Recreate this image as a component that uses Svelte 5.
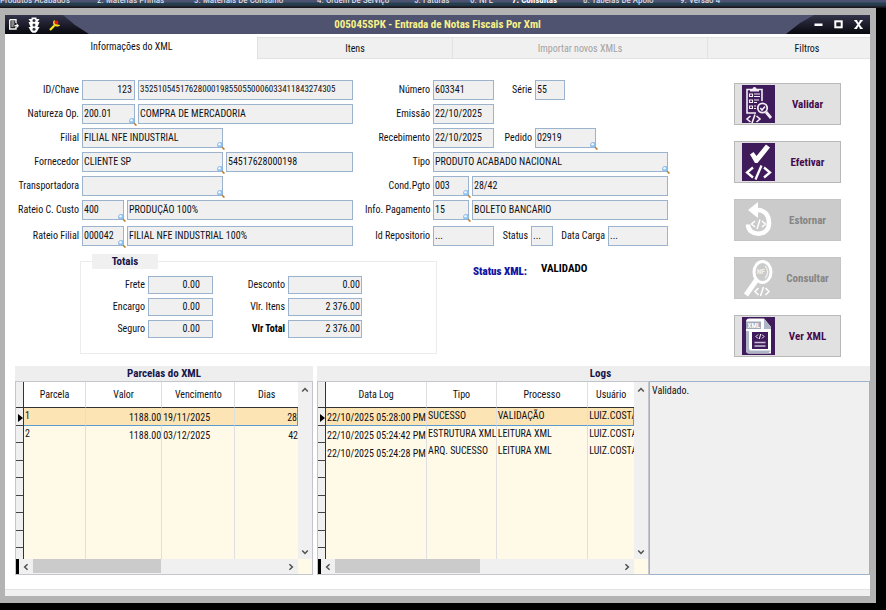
<script>
  const menu = [
    { text: 'Produtos Acabados', width: 97 },
    { text: '2. Matérias Primas', width: 97 },
    { text: '3. Materiais De Consumo', width: 123 },
    { text: '4. Ordem De Serviço', width: 97 },
    { text: '5. Faturas', width: 56 },
    { text: '6. NFE', width: 42 },
    { text: '7. Consultas', width: 71, active: true },
    { text: '8. Tabelas De Apoio', width: 97 },
    { text: '9. Versão 4', width: 80 }
  ];

  const leftRows = [
    [{ label: 'ID/Chave', value: '123', size: 'w53', right: true }, { name: 'Chave', value: '35251054517628000198550550006033411843274305', size: 'fill', long: true }],
    [{ label: 'Natureza Op.', value: '200.01', size: 'w53', lookup: true }, { name: 'Descrição da natureza', value: 'COMPRA DE MERCADORIA', size: 'fill' }],
    [{ label: 'Filial', value: 'FILIAL NFE INDUSTRIAL', size: 'w141', lookup: true }],
    [{ label: 'Fornecedor', value: 'CLIENTE SP', size: 'w141', lookup: true }, { name: 'CNPJ', value: '54517628000198', size: 'fill' }],
    [{ label: 'Transportadora', value: '', size: 'w141', lookup: true }],
    [{ label: 'Rateio C. Custo', value: '400', size: 'w42', lookup: true }, { name: 'Descrição do rateio', value: 'PRODUÇÃO 100%', size: 'fill' }],
    [{ label: 'Rateio Filial', value: '000042', size: 'w42', lookup: true }, { name: 'Descrição do rateio da filial', value: 'FILIAL NFE INDUSTRIAL 100%', size: 'fill' }]
  ];

  const rightRows = [
    [{ label: 'Número', value: '603341', size: 'w61' }, { label: 'Série', value: '55', size: 'w30', lw: 'l35' }],
    [{ label: 'Emissão', value: '22/10/2025', size: 'w61' }],
    [{ label: 'Recebimento', value: '22/10/2025', size: 'w61' }, { label: 'Pedido', value: '02919', size: 'w61', lw: 'l35', lookup: true }],
    [{ label: 'Tipo', value: 'PRODUTO ACABADO NACIONAL', size: 'fill', lookup: true }],
    [{ label: 'Cond.Pgto', value: '003', size: 'w36', lookup: true }, { name: 'Condição', value: '28/42', size: 'fill' }],
    [{ label: 'Info. Pagamento', value: '15', size: 'w36', lookup: true }, { name: 'Forma de pagamento', value: 'BOLETO BANCÁRIO', size: 'fill' }],
    [{ label: 'Id Repositorio', value: '...', size: 'w61' }, { label: 'Status', value: '...', size: 'w22', lw: 'l31' }, { label: 'Data Carga', value: '...', size: 'fill', lw: 'l49' }]
  ];

  const totals = [
    ['Frete', '0.00', 'Desconto', '0.00'],
    ['Encargo', '0.00', 'Vlr. Itens', '2 376.00'],
    ['Seguro', '0.00', 'Vlr Total', '2 376.00']
  ];

  const parcelas = [
    ['1', '1188.00', '19/11/2025', '28'],
    ['2', '1188.00', '03/12/2025', '42']
  ];
  const logs = [
    ['22/10/2025 05:28:00 PM', 'SUCESSO', 'VALIDAÇÃO', 'LUIZ.COSTA'],
    ['22/10/2025 05:24:42 PM', 'ESTRUTURA XML OK', 'LEITURA XML', 'LUIZ.COSTA'],
    ['22/10/2025 05:24:28 PM', 'ARQ. SUCESSO', 'LEITURA XML', 'LUIZ.COSTA']
  ];
  const blanks = (n) => Array.from({ length: n });
</script>

{#snippet field(f, id)}
  {#if f.lw}<label class="inline {f.lw}" for={id}>{f.label}</label>{/if}
  <span class="box {f.size}">
    <input {id} class:right={f.right} class:long={f.long} value={f.value} aria-label={f.name} readonly />
    {#if f.lookup}
      <svg class="lens" viewBox="0 0 8 8" aria-hidden="true">
        <path d="M4.500 4.500L7.400 7.600" stroke="#b98332" stroke-width="1.600" />
        <circle cx="3.100" cy="3" r="2.700" fill="#8fc4f2" stroke="#8fb4dc" stroke-width=".6" />
        <circle cx="2.500" cy="2.300" r="1.200" fill="#eef8ff" />
      </svg>
    {/if}
  </span>
{/snippet}

{#snippet form(rows, prefix)}
  <div class="form">
    {#each rows as row, r}
      <div class="row">
        <label for="{prefix}{r}-0">{row[0].label}</label>
        <div class="cells">
          {#each row as f, c}
            {@render field(c === 0 ? { ...f, lw: '' } : f, `${prefix}${r}-${c}`)}
          {/each}
        </div>
      </div>
    {/each}
  </div>
{/snippet}

{#snippet chevron(dir, name)}
  <button class="arrow" aria-label={name}>
    <svg class={dir} viewBox="0 0 8 8" aria-hidden="true"><path d="M1.2 5.6L4 2.6L6.8 5.6" fill="none" stroke="#505050" stroke-width="1.5" /></svg>
  </button>
{/snippet}

{#snippet grid(kind, heads, rows)}
  <div class="datagrid {kind}">
    <div class="viewport">
      <table>
        <colgroup><col class="mark" />{#each heads as h, i}<col class="c{i}" />{/each}</colgroup>
        <thead><tr><th class="mark"></th>{#each heads as h}<th>{h}</th>{/each}</tr></thead>
        <tbody>
          {#each rows as row, r}
            <tr class:selected={r === 0}>
              <td class="mark">{#if r === 0}<svg viewBox="0 0 5 8" aria-hidden="true"><path d="M0 0L5 4L0 8Z" /></svg>{/if}</td>
              {#each row as cell}<td>{cell}</td>{/each}
            </tr>
          {/each}
          {#each blanks(9 - rows.length) as _}
            <tr><td class="mark"></td>{#each heads as h}<td></td>{/each}</tr>
          {/each}
        </tbody>
      </table>
    </div>
    <div class="vscroll">{@render chevron('up', 'Rolar para cima')}{@render chevron('down', 'Rolar para baixo')}</div>
    <div class="hscroll">
      <span class="stop"></span>
      {@render chevron('left', 'Rolar para a esquerda')}
      <span class="track"><span class="thumb"></span></span>
      {@render chevron('rightward', 'Rolar para a direita')}
    </div>
  </div>
{/snippet}

<div class="page">
  <nav class="menu">
    {#each menu as m}<a href="#menu" class:active={m.active} style:width="{m.width}px">{m.text}</a>{/each}
  </nav>

  <main class="window">
    <header class="titlebar">
      <div class="tools">
        <button aria-label="Sair">
          <svg width="10" height="11" viewBox="0 0 10 11"><path d="M.7.7H7V4M7 8V10H.7V.7" fill="#222" stroke="#f4f4f4" stroke-width="1.4" /><path d="M2.3 3H5.3M2.3 5H5.3M2.3 7H4.6" stroke="#f4f4f4" /><path d="M5.5 6H7.5V4L10 6.8L7.5 9.5V7.6H5.5Z" fill="#f4f4f4" /></svg>
        </button>
        <button aria-label="Semáforo">
          <svg width="12" height="16" viewBox="0 0 12 16"><path d="M3.5.5H8.5V2H11.5L9.5 5H11.5L9.5 10H11.5L9 14.5L7.5 15.8H4.5L3 14.5L.5 10H2.5L.5 5H2.5L.5 2H3.5Z" fill="#fff" /><g fill="#34344a"><circle cx="6" cy="3.5" r="1.5" /><circle cx="6" cy="7.9" r="1.5" /><circle cx="6" cy="12.3" r="1.5" /></g></svg>
        </button>
        <button aria-label="Configurações">
          <svg width="12" height="12" viewBox="0 0 12 12"><path d="M1 11L5.4 6.4" stroke="#f4e51c" stroke-width="2.2" /><path d="M5.6.8C3.6 2 3.6 5 5.2 6.6C7 8 10 7.8 11.2 6L8.5 5.4L6 3.6Z" fill="#f4e51c" /><circle cx="7.4" cy="3.6" r="2" fill="#e01818" /></svg>
        </button>
      </div>
      <h1>005045SPK - Entrada de Notas Fiscais Por Xml</h1>
      <div class="controls">
        <button aria-label="Minimizar"><svg width="9" height="9" viewBox="0 0 9 9"><path d="M.5 4.7H8.5" stroke="#fff" stroke-width="2.6" /></svg></button>
        <button aria-label="Maximizar"><svg width="9" height="9" viewBox="0 0 9 9"><rect x="1.3" y="1.3" width="6.4" height="6" fill="none" stroke="#fff" stroke-width="2" /></svg></button>
        <button aria-label="Fechar"><svg width="9" height="9" viewBox="0 0 9 9"><path d="M1.7.5L7.3 8.5M7.3.5L1.7 8.5" stroke="#fff" stroke-width="2" /><path d="M.3 .7H3.2M5.8 .7H8.7M.3 8.3H3.2M5.8 8.3H8.7" stroke="#fff" stroke-width="1.2" /></svg></button>
      </div>
    </header>

    <div class="tabs" role="tablist">
      <button role="tab" class="current" aria-selected="true">Informações do XML</button>
      <button role="tab" aria-selected="false">Itens</button>
      <button role="tab" aria-selected="false" disabled>Importar novos XMLs</button>
      <button role="tab" aria-selected="false">Filtros</button>
    </div>

    <section class="top">
      <div class="forms">
        <div class="columns">
          {@render form(leftRows, 'a')}
          {@render form(rightRows, 'b')}
        </div>
        <div class="summary">
          <fieldset>
            <legend>Totais</legend>
            <div class="totals">
              {#each totals as t, i}
                <label for="t{i}a">{t[0]}</label>
                <input id="t{i}a" class="short" value={t[1]} readonly />
                <label for="t{i}b" class:strong={i === 2}>{t[2]}</label>
                <input id="t{i}b" value={t[3]} readonly />
              {/each}
            </div>
          </fieldset>
          <p class="status"><b>Status XML:</b> <output>VALIDADO</output></p>
        </div>
      </div>

      <div class="actions">
        <button>
          <svg viewBox="0 0 33 38" aria-hidden="true"><rect width="33" height="38" fill="#401b5b" />
            <g fill="none" stroke="#f3eef6" stroke-width="1.6"><path d="M14 28H5V4.5H20V16" /><path d="M7.5 9H10.500V11.500H7.500ZM7.500 15H10.500V17.500H7.500ZM7.500 21H10.500V23.500H7.500ZM12 9H18M12 11.500H18M12 15H17M12 17.500H15M12 21H14M12 23.500H14" stroke-width="1.1" /><circle cx="20.500" cy="23" r="4.700" stroke-width="1.800" /><path d="M24 27L29 33" stroke-width="2.800" /><path d="M18.300 23L20 25L23 21.500" /><path d="M8.500 31L5 34L8.500 37M14.500 31L18 34L14.500 37M13 29.500L10 38" stroke-width="1.600" /></g><path d="M8 6.500V4H10.500C10.500 1.300 14.500 1.300 14.500 4H17V6.500Z" fill="#f3eef6" /></svg>
          <span>Validar</span>
        </button>
        <button>
          <svg viewBox="0 0 33 38" aria-hidden="true"><rect width="33" height="38" fill="#401b5b" /><path d="M8 11.500L11.500 9L14.500 13L24 1.500L28 4.500L15.500 20H13Z" fill="#fff" /><path d="M11 24.500L5 29.500L11 34.500M22 24.500L28 29.500L22 34.500M19.500 22.500L13.500 36.500" fill="none" stroke="#fff" stroke-width="2.300" /></svg>
          <span>Efetivar</span>
        </button>
        <button disabled>
          <svg viewBox="0 0 33 38" aria-hidden="true"><path d="M13 9H15C23 9 27 14 27 22.500C27 36 6 36 6 23.500" fill="none" stroke="#fff" stroke-width="4.500" /><path d="M6 9L16 1V17Z" fill="#fff" /><path d="M13 20L9.500 23L13 26M20 20L23.500 23L20 26M18 18.500L15 28" fill="none" stroke="#fff" stroke-width="1.400" /></svg>
          <span>Estornar</span>
        </button>
        <button disabled>
          <svg viewBox="0 0 33 38" aria-hidden="true"><ellipse cx="20.500" cy="13" rx="8.500" ry="10.500" fill="none" stroke="#fff" stroke-width="3" /><path d="M23 7C26.500 10 26.500 16 23 19" fill="none" stroke="#eee" stroke-width="1.400" /><path d="M14.500 21L4 36" stroke="#fff" stroke-width="5" /><text x="15" y="15" font-size="7" font-weight="700" fill="#f2f2f2">NF</text><path d="M16.500 29L13 32.500L16.500 36M23.500 29L27 32.500L23.500 36M21.500 28L18.500 37" fill="none" stroke="#fff" stroke-width="1.500" /></svg>
          <span>Consultar</span>
        </button>
        <button>
          <svg viewBox="0 0 33 38" aria-hidden="true"><rect width="33" height="38" fill="#401b5b" /><path d="M7 1.500H22L29 10V36.500H7Q4 36.500 4 33V5Q4 1.500 7 1.500Z" fill="#fff" /><path d="M4 14V33Q4 36.500 7 36.500H26L29 33.500H9Q7 33.500 7 31V14Z" fill="#aeb5c6" /><path d="M22 1.500V12H29V10Z" fill="#aeb5c6" /><path d="M4 4.500H19V12H4Z" fill="#9faabd" /><text x="5.500" y="11" font-size="7" font-weight="700" fill="#fff">XML</text><rect x="10" y="15" width="16" height="17" fill="#401b5b" /><path d="M12.500 25.500H23.500M12.500 29H23.500" stroke="#c9c3d8" stroke-width="1.500" /><path d="M16 17.500L14 19.500L16 21.500M20 17.500L22 19.500L20 21.500M18.700 17L17.300 22" stroke="#fff" fill="none" /></svg>
          <span>Ver XML</span>
        </button>
      </div>
    </section>

    <section class="bottom">
      <div class="panel">
        <h2>Parcelas do XML</h2>
        {@render grid('parcelas', ['Parcela', 'Valor', 'Vencimento', 'Dias'], parcelas)}
      </div>
      <div class="panel">
        <h2>Logs</h2>
        <div class="logrow">
          {@render grid('logs', ['Data Log', 'Tipo', 'Processo', 'Usuário'], logs)}
          <textarea aria-label="Detalhe do log" readonly>Validado.</textarea>
        </div>
      </div>
    </section>

    <footer class="statusbar"></footer>
  </main>
</div>

<style>
  :global(body) { margin: 0; background: #000; }
  .page, .page :is(button, input, textarea, svg) {
    font-family: "Roboto Condensed", Roboto, "Liberation Sans", sans-serif;
  }
  .page {
    box-sizing: border-box; min-height: 100vh; padding: 0 10px 7px 0;
    display: flex; flex-direction: column; background: #000; font-size: 10px; line-height: 12px; color: #101016;
  }
  .page *, .page *::before { box-sizing: border-box; }
  button { margin: 0; padding: 0; border: 0; background: none; color: inherit; font-size: 10px; }

  .menu {
    display: flex; align-items: flex-end; height: 8px; margin-right: -10px; padding-bottom: 3px; overflow: hidden;
    background: linear-gradient(#4c5372 0 2px, #24404e 3px 5px, #292838 6px, #111 8px);
  }
  .menu a { flex: none; color: #e8eaf2; text-decoration: none; font-size: 9px; line-height: 10px; white-space: nowrap; }
  .menu a.active { color: #fff; font-weight: 700; }

  .window {
    flex: 1; display: flex; flex-direction: column; background: #fff;
    border: solid #b3b3b3; border-width: 7px 6px 7px 5px;
  }
  .titlebar { display: flex; align-items: center; height: 19px; background: #4f536f; }
  .titlebar h1 { flex: 1; margin: 0; text-align: center; font-size: 11px; line-height: 19px; color: #f6f28a; }
  .tools, .controls {
    display: flex; align-items: center; width: 84px; height: 19px;
    background: linear-gradient(#33334a, #08080f);
  }
  .tools { gap: 9px; padding-left: 4px; clip-path: polygon(0 0, 58px 0, 70px 10px, 84px 19px, 0 19px); }
  .controls { gap: 11px; justify-content: flex-end; padding-right: 7px; clip-path: polygon(28px 0, 100% 0, 100% 100%, 0 100%, 14px 8px); }
  .tools svg, .controls svg { display: block; }

  .tabs { display: grid; grid-template-columns: 252fr 195fr 255fr 163fr; margin-top: 3px; }
  .tabs button { height: 22px; background: #f0f0f0; border: 1px solid #e2e2e2; border-right-width: 0; color: #111; }
  .tabs .current { background: #fff; border-color: #fff; padding-bottom: 3px; }
  .tabs button:nth-child(3) { color: #a2a2a2; }
  .tabs button:nth-child(4) { padding-left: 36px; }

  .top { display: flex; padding: 21px 29px 0 10px; }
  .forms { flex: 1; min-width: 0; }
  .columns { display: grid; grid-template-columns: 338fr 303fr; gap: 12px; }
  .form { display: flex; flex-direction: column; gap: 4px; }
  .row { display: grid; grid-template-columns: 64px 1fr; column-gap: 3px; }
  .row:last-child { margin-top: 2px; }
  .form + .form .row { grid-template-columns: 65px 1fr; }
  .row label { text-align: right; line-height: 20px; white-space: nowrap; }
  .cells { display: flex; gap: 3px; min-width: 0; }
  .box { position: relative; flex: none; height: 20px; }
  input {
    display: block; width: 100%; height: 100%; margin: 0; padding: 0 2px 2px 1px; outline: 0;
    border: 1px solid #9bb3cd; background: #f0f0f0; color: #101016; font-size: 10px;
  }
  .right { text-align: right; }
  .long { font-size: 9px; }
  .box.fill { flex: 1; min-width: 0; }
  .w22 { width: 22px; } .w30 { width: 30px; } .w36 { width: 36px; } .w42 { width: 42px; }
  .w53 { width: 53px; } .w61 { width: 61px; } .w141 { width: 141px; }
  .l31 { width: 31px; } .l35 { width: 35px; } .l49 { width: 49px; }
  .lens { position: absolute; right: -2px; bottom: -2px; width: 8px; height: 8px; }

  .summary { display: flex; align-items: flex-start; margin-top: 8px; }
  fieldset { width: 357px; margin: 0 0 0 65px; padding: 7px 0 15px; border: 1px solid #ececec; }
  legend {
    display: flex; justify-content: center; width: 66px; margin-left: 11px; padding: 0;
    background: #f0f0f0; font-size: 11px; line-height: 15px; font-weight: 700; color: #15154a;
  }
  .totals { display: grid; grid-template-columns: 64px 65px 69px 74px; gap: 4px 3px; }
  .totals label { text-align: right; line-height: 18px; }
  .totals label.strong { font-weight: 700; color: #000; }
  .totals input { height: 18px; text-align: right; padding-right: 1px; }
  .totals input.short { padding-right: 12px; }
  .status { display: flex; gap: 14px; margin: 9px 0 0 36px; font-size: 11px; font-weight: 700; color: #000; }
  .status b { color: #1414a0; padding-top: 3px; }

  .actions { width: 107px; margin: 3px 0 0 66px; display: flex; flex-direction: column; gap: 16px; }
  .actions button {
    display: flex; align-items: center; height: 42px; padding-left: 7px; background: #e1e1e1; border: 1px solid #b8b8b8;
    font-size: 11px; font-weight: 700; color: #450b4d;
  }
  .actions button:disabled { background: #cbcbcb; border-color: #c4c4c4; color: #858585; }
  .actions svg { flex: none; width: 33px; height: 38px; }
  .actions span { flex: 1; text-align: center; }

  .bottom { flex: 1; display: grid; grid-template-columns: 298fr 553fr; gap: 4px; margin-top: 9px; padding-left: 10px; }
  .panel { display: flex; flex-direction: column; min-width: 0; }
  h2 { margin: 0; background: #eee; text-align: center; font-size: 11px; line-height: 15px; color: #15154a; }
  .panel + .panel h2 { padding-left: 14px; }
  .logrow { flex: 1; display: grid; grid-template-columns: 332fr 221fr; }
  textarea {
    width: 100%; height: 100%; margin: 0; padding: 3px 2px; resize: none; outline: 0; border: 1px solid #9bb3cd; border-radius: 0;
    background: #f0f0f0; color: #101016; font-size: 10px; line-height: 12px;
  }

  .datagrid {
    flex: 1; display: grid; grid-template: minmax(0, 1fr) 15px / minmax(0, 1fr) 14px; min-width: 0;
    border: 1px solid #c3c6cc; background: #fff9e8;
  }
  .viewport { position: relative; overflow: hidden; height: 177px; }
  table { width: 100%; table-layout: fixed; border-collapse: separate; border-spacing: 0; }
  col.mark { width: 8px; }
  .parcelas .c0 { width: 22%; } .parcelas .c1 { width: 27%; } .parcelas .c2 { width: 26%; }
  .logs .c0 { width: 32%; } .logs .c1 { width: 22%; } .logs .c2 { width: 29%; }
  th, td { padding: 0; overflow: hidden; white-space: nowrap; border-right: 1px solid #dfdfdf; }
  th { height: 26px; background: #fff; border-bottom: 1px solid #333; font-weight: 400; }
  td { height: 17px; padding: 0 0 0 1px; line-height: 15px; vertical-align: top; }
  tr:nth-child(odd) td { height: 18px; }
  th:last-child, td:last-child { border-right: 0; }
  .mark { background: #f0f0f0; border-right: 1px solid #333; }
  td.mark { padding: 0; border-bottom: 1px solid #444; }
  td.mark svg { display: block; width: 5px; height: 8px; margin: 6px 0 0 2px; }
  .selected td:not(.mark) { background: #fde4b4; border-bottom: 1px solid #5b9bd3; }
  .selected td:last-child { border-right: 1px solid #5b9bd3; }
  .parcelas td:nth-child(n + 3), .logs td:nth-child(2) { vertical-align: bottom; }
  .parcelas td:nth-child(3), .parcelas td:nth-child(5) { text-align: right; }

  .arrow { display: grid; place-items: center; width: 14px; height: 15px; }
  .arrow svg { width: 8px; height: 8px; }
  .down { transform: rotate(180deg); } .left { transform: rotate(-90deg); } .rightward { transform: rotate(90deg); }
  .vscroll { display: flex; flex-direction: column; justify-content: space-between; background: #f0f0f0; }
  .hscroll { display: flex; background: #f0f0f0; }
  .stop { width: 3px; background: #000; }
  .track { flex: 1; }
  .thumb { display: block; width: 51%; height: 14px; background: #cbcbcb; }
  .statusbar { height: 7px; margin-top: 14px; background: #f0f0f0; border-top: 1px solid #e2e2e2; }
</style>
